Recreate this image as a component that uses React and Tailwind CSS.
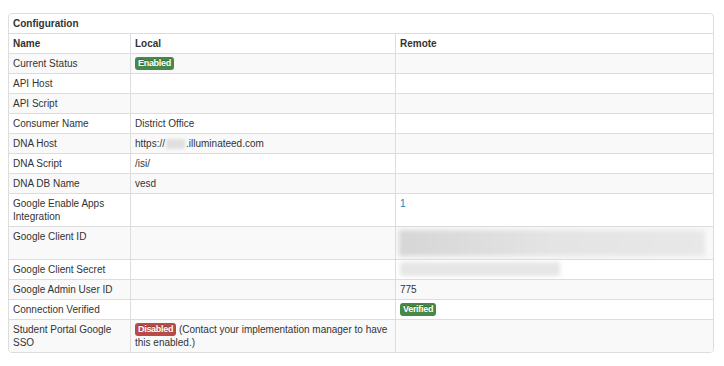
import React from "react";

const Badge = ({ color, children }) => (
  <span
    className={`inline-block align-top rounded-[3px] px-[3px] text-[9px] font-bold leading-[13px] tracking-[-0.3px] text-white [text-shadow:0_-1px_0_rgba(0,0,0,0.25)] ${color}`}
  >
    {children}
  </span>
);

const Smudge = ({ className }) => (
  <span className={`inline-block bg-[#e0e0e0] blur-[1.5px] ${className}`} />
);

const rows = [
  { name: "Current Status", local: <Badge color="bg-[#468847]">Enabled</Badge> },
  { name: "API Host" },
  { name: "API Script" },
  { name: "Consumer Name", local: "District Office" },
  {
    name: "DNA Host",
    local: (
      <span className="inline-flex items-center">
        https://
        <Smudge className="mx-[1px] h-[10px] w-[19px]" />
        .illuminateed.com
      </span>
    ),
  },
  { name: "DNA Script", local: "/isi/" },
  { name: "DNA DB Name", local: "vesd" },
  {
    name: "Google Enable Apps Integration",
    remote: <span className="text-[#0088cc]">1</span>,
  },
  {
    name: "Google Client ID",
    remote: (
      <div className="-ml-[1px] h-[26px] w-[306px] bg-gradient-to-r from-[#d6d6d6] via-[#e4e4e4] to-[#e8e8e8] blur-[2px]" />
    ),
  },
  {
    name: "Google Client Secret",
    remote: <div className="mt-[-1px] h-[14px] w-[160px] bg-[#e6e6e6] blur-[2px]" />,
  },
  { name: "Google Admin User ID", remote: "775" },
  { name: "Connection Verified", remote: <Badge color="bg-[#468847]">Verified</Badge> },
  {
    name: "Student Portal Google SSO",
    local: (
      <>
        <Badge color="bg-[#b94a48]">Disabled</Badge> (Contact your implementation manager to have this
        enabled.)
      </>
    ),
  },
];

export default function App() {
  const cell = "border-t border-[#dddddd] px-[4px] py-[3px] leading-[13px]";

  return (
    <div className="bg-white pt-[13px] pl-2 font-['Liberation_Sans',Arial,sans-serif] text-[10px] text-[#333333]">
      <div className="w-[706px] overflow-hidden rounded-[4px] border border-[#dddddd]">
        <div className="px-[4px] py-[3px] font-bold leading-[13px]">Configuration</div>
        <div className="grid grid-cols-[121px_265px_1fr]">
          <div className={`${cell} font-bold`}>Name</div>
          <div className={`${cell} border-l font-bold`}>Local</div>
          <div className={`${cell} border-l font-bold`}>Remote</div>
          {rows.map((row, i) => {
            const bg = i % 2 === 0 ? "bg-[#f9f9f9]" : "bg-white";
            return (
              <React.Fragment key={row.name}>
                <div className={`${cell} ${bg}`}>{row.name}</div>
                <div className={`${cell} ${bg} border-l`}>{row.local}</div>
                <div className={`${cell} ${bg} border-l`}>{row.remote}</div>
              </React.Fragment>
            );
          })}
        </div>
      </div>
    </div>
  );
}
